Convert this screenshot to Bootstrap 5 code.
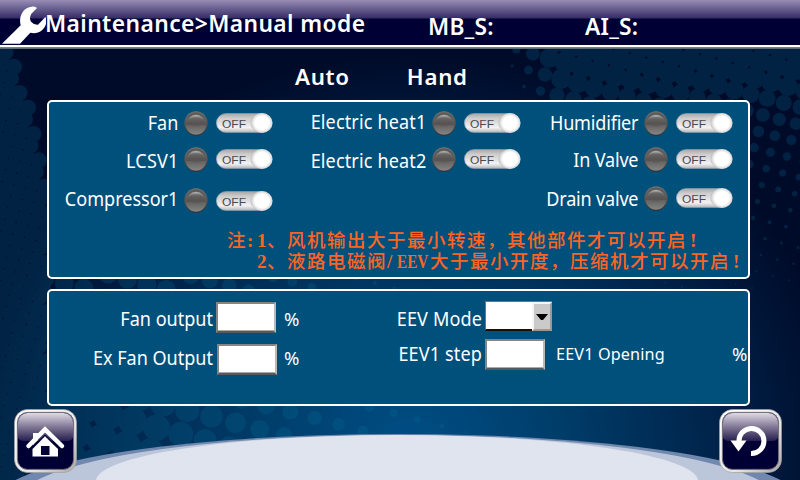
<!DOCTYPE html>
<html lang="en">
<head>
<meta charset="utf-8">
<meta name="viewport" content="width=device-width, initial-scale=1">
<title>Maintenance - Manual mode</title>
<link href="https://cdn.jsdelivr.net/npm/bootstrap@5.3.0/dist/css/bootstrap.min.css" rel="stylesheet">
<style>
body{width:800px;height:480px;overflow:hidden;background:#000a28;color:#fff;font-family:"Noto Sans","Noto Sans CJK SC",sans-serif}
.screen{width:800px;height:480px;isolation:isolate}
.backdrop{inset:0;z-index:-1}
.topbar{height:49px;background:linear-gradient(#988db4 0,#362d67 18px,#000034 19px,#000034 45px,#fff 45px,#fff 47px,#85888b 47px,#55606a 49px);font-size:22.8px;font-weight:600;line-height:48px;white-space:nowrap}
.topbar .wrench{width:46px;height:45px;flex:none}
.t-title{width:383px;letter-spacing:.4px;margin-left:-1px}
.t-mb{width:157px;padding-top:3px;letter-spacing:.2px}
.t-ai{padding-top:3px;letter-spacing:.2px}
.modes{height:51px;padding:11px 0 0 295px;gap:57px;font-size:22.3px;font-weight:600;line-height:34px;letter-spacing:.7px}
.panel{width:703px;margin-left:47px;background:#00507c;border:2px solid #fff;border-radius:5px}
.p-relay{height:179px}
.p-out{height:117px;margin-top:10px}
.cols{height:127px}
.c1{width:224px}.c2{width:248px}.c3{width:212px}
.unit{height:38px}
.lbl{font-size:19.2px;line-height:26px;white-space:nowrap;transform:scaleX(.94);transform-origin:right}
.unit .lbl{flex:1;text-align:right;padding-right:6px}
.c1 .unit:nth-child(2) .lbl,.c2 .lbl{letter-spacing:.15px}
.c3 .lbl{letter-spacing:-.2px}
.led{width:24px;height:25px;margin:1px 8px 0 0;flex:none}
.tog{width:57px;height:21px;flex:none}
.c1 .unit:nth-child(1),.c3 .unit:nth-child(1){height:36px;padding-top:8px}
.c2 .unit:nth-child(1){height:36px;padding-top:8px}
.c1 .unit:nth-child(2),.c2 .unit:nth-child(2),.c3 .unit:nth-child(2){height:39px;padding-top:8px}
.c1 .unit:nth-child(3){padding-top:11px}
.c3 .unit:nth-child(3){padding-top:8px}
.c1 .unit:nth-child(3) .led{margin-top:0}
.unit .tog{margin-top:3px}
.c2 .unit:nth-child(1) .lbl{margin-top:-1px}
.c1 .unit:nth-child(2) .lbl,.c2 .unit:nth-child(2) .lbl{margin-top:2px}
.c3 .unit:nth-child(2) .lbl{margin-top:1px}
.c1 .unit:nth-child(3) .lbl{margin-top:-2px}
.c3 .unit:nth-child(3) .lbl{margin-top:1px}
.note{color:#ff6423;font-family:"Noto Sans CJK SC",sans-serif;font-size:18.5px;height:21px;letter-spacing:1.5px;font-weight:500;line-height:21px;padding-left:178px;white-space:nowrap}
.note span{display:inline-block;width:10px;line-height:18px;height:18px;vertical-align:baseline;font-family:"Liberation Serif",serif;font-size:19px;letter-spacing:0;font-weight:700}
.note span:last-child{padding-left:3px}
.note .eev{width:33px;transform:scaleX(.8);transform-origin:left}
.note .ind{width:30px}
.gL{width:340px;padding-top:7px}
.fld{height:39px}
.fld .lbl{text-align:right}
.gL .lbl{width:164px}
.gL .fld:nth-child(1) .entry{margin:4px 0 0 3px}
.gL .fld:nth-child(2) .entry{margin:7px 0 0 4px}
.gL .fld:nth-child(1) .pct{margin-left:8px}
.gL .fld:nth-child(2) .pct{margin-left:7px}
.gR{padding-top:10px}
.gR .lbl{width:93px;margin-right:3px;letter-spacing:.15px}
.row-mode{height:38px!important}
.row-mode .lbl{margin-top:5px}
.row-step .lbl,.row-step .opening,.row-step .pct{margin-top:2px}
.entry{width:60px;height:31px;background:#fff;border:2px solid #b9b9b9;border-top-color:#858585;border-left-color:#858585;box-shadow:inset 0 -1px #aaa;border-bottom-color:#555a60;border-radius:0;padding:0;flex:none}
.combo{width:67px;height:30px;border:1px solid #77746f;background:#fff;flex:none;border-bottom:2px solid #111}
.combo .drop{width:20px;height:29px;background:#cacaca;border:2px solid #f5f5f5;border-right-color:#999;border-bottom-color:#999;margin-right:-1px}
.pct{font-size:18.5px;line-height:26px}
.opening{font-size:16.2px;line-height:26px;width:187px;padding-left:11px;letter-spacing:.15px}
.keys{padding:3px 18px 0 14px}
.key{width:63px;height:64px;background:none;border:0;padding:0}
</style>
</head>
<body>
<div class="screen position-relative">
<svg class="backdrop position-absolute" width="800" height="480" viewBox="0 0 800 480">
<defs>
<radialGradient id="glow" gradientUnits="userSpaceOnUse" cx="0" cy="0" r="1" gradientTransform="translate(410 455) scale(440 400)">
<stop offset="0" stop-color="#004f87"/><stop offset=".35" stop-color="#003d69"/><stop offset=".7" stop-color="#00234a"/><stop offset="1" stop-color="#000b29"/></radialGradient>
<linearGradient id="ledRim" x1="0" y1="0" x2="0" y2="1"><stop offset="0" stop-color="#777"/><stop offset="1" stop-color="#303030"/></linearGradient>
<linearGradient id="ledTop" x1="0" y1="0" x2="0" y2="1"><stop offset="0" stop-color="#b5b5b5"/><stop offset=".4" stop-color="#6e6d6c"/><stop offset=".8" stop-color="#575452"/><stop offset="1" stop-color="#575452"/></linearGradient>
<linearGradient id="ledLow" x1="0" y1="0" x2="0" y2="1"><stop offset=".5" stop-color="#5e5c5b"/><stop offset="1" stop-color="#858585"/></linearGradient>
<linearGradient id="track" x1="0" y1="0" x2="0" y2="1"><stop offset="0" stop-color="#aaa"/><stop offset=".25" stop-color="#cecccc"/><stop offset=".75" stop-color="#f3f1f1"/><stop offset="1" stop-color="#b9b9bb"/></linearGradient>
<radialGradient id="knob"><stop offset=".68" stop-color="#fff"/><stop offset="1" stop-color="#d2d2d2"/></radialGradient>
<linearGradient id="keyRim" x1="0" y1="0" x2="1" y2="1"><stop offset="0" stop-color="#fff"/><stop offset=".6" stop-color="#e9e8e8"/><stop offset="1" stop-color="#aaa6a6"/></linearGradient>
<linearGradient id="gloss" x1="0" y1="0" x2="0" y2="1"><stop offset="0" stop-color="#dedae4"/><stop offset=".5" stop-color="#817795"/><stop offset="1" stop-color="#251d4e"/></linearGradient>
<symbol id="led" viewBox="0 0 24 25"><ellipse cx="12" cy="12.5" rx="11.7" ry="12.3" fill="url(#ledRim)"/><ellipse cx="12" cy="12.5" rx="10.6" ry="11.3" fill="url(#ledLow)"/><path d="M1.6 14A10.5 11.8 0 0 1 22.4 14Z" fill="url(#ledTop)"/><ellipse cx="12" cy="11" rx="7.5" ry="5" fill="#575452" opacity=".4"/></symbol>
<symbol id="tog" viewBox="0 0 57 21"><rect x=".5" y=".7" width="55" height="18.6" rx="9.3" fill="url(#track)" stroke="#a5adb5" stroke-width=".8"/><path d="M41 1.8A10 9 0 0 0 41 18.3L46 18V2Z" fill="#eee" stroke="#b4b4b4" stroke-width=".8"/><ellipse cx="46" cy="10" rx="10.6" ry="9.9" fill="url(#knob)"/><text x="6" y="14.8" font-family="Liberation Sans, sans-serif" font-size="11.4" textLength="24" lengthAdjust="spacingAndGlyphs" fill="#4a4a4a">OFF</text></symbol>
<symbol id="keycap" viewBox="0 0 63 64"><rect x=".5" y=".5" width="62" height="63" rx="13" fill="url(#keyRim)" stroke="#a39e9e" stroke-width=".7"/><rect x="3.4" y="3.4" width="56.2" height="57" rx="10" fill="#000034" stroke="#77717d" stroke-width="1"/><path d="M4 31V13.5A9.5 9.5 0 0 1 13.5 4H49.5A9.5 9.5 0 0 1 59 13.5V28Q59 31 54 32H9Q4 31 4 28Z" fill="url(#gloss)"/></symbol>
</defs>
<rect width="800" height="480" fill="url(#glow)"/>
<g id="halftone"></g>
<ellipse cx="398" cy="499" rx="400" ry="65" fill="#7088ad"/>
<ellipse cx="398" cy="500" rx="379" ry="65" fill="#bcc6da"/>
<ellipse cx="397" cy="481" rx="301" ry="46" fill="#e0e4ee"/>
</svg>

<header class="topbar d-flex">
<svg class="wrench" viewBox="0 0 138 135"><path d="M6 131L62 76C55 50 69 22 95 20Q105 19 111 24L94 41Q86 56 94 66Q102 75 114 74L136 51L140 58C140 85 118 105 91 98L60 131Z" fill="#fff"/></svg>
<div class="t-title">Maintenance&gt;Manual mode</div><div class="t-mb">MB_S:</div><div class="t-ai">AI_S:</div>
</header>
<div class="modes d-flex"><div>Auto</div><div>Hand</div></div>

<section class="panel p-relay">
<div class="cols d-flex">
<div class="c1">
<div class="unit d-flex"><div class="lbl">Fan</div><svg class="led"><use href="#led"/></svg><svg class="tog"><use href="#tog"/></svg></div>
<div class="unit d-flex"><div class="lbl">LCSV1</div><svg class="led"><use href="#led"/></svg><svg class="tog"><use href="#tog"/></svg></div>
<div class="unit d-flex"><div class="lbl">Compressor1</div><svg class="led"><use href="#led"/></svg><svg class="tog"><use href="#tog"/></svg></div>
</div>
<div class="c2">
<div class="unit d-flex"><div class="lbl">Electric heat1</div><svg class="led"><use href="#led"/></svg><svg class="tog"><use href="#tog"/></svg></div>
<div class="unit d-flex"><div class="lbl">Electric heat2</div><svg class="led"><use href="#led"/></svg><svg class="tog"><use href="#tog"/></svg></div>
</div>
<div class="c3">
<div class="unit d-flex"><div class="lbl">Humidifier</div><svg class="led"><use href="#led"/></svg><svg class="tog"><use href="#tog"/></svg></div>
<div class="unit d-flex"><div class="lbl">In Valve</div><svg class="led"><use href="#led"/></svg><svg class="tog"><use href="#tog"/></svg></div>
<div class="unit d-flex"><div class="lbl">Drain valve</div><svg class="led"><use href="#led"/></svg><svg class="tog"><use href="#tog"/></svg></div>
</div>
</div>
<div class="note" lang="zh-CN">注<span>:</span><span>1</span>、风机输出大于最小转速，其他部件才可以开启<span>!</span></div>
<div class="note" lang="zh-CN"><span class="ind"></span><span>2</span>、液路电磁阀<span>/</span><span class="eev">EEV</span>大于最小开度，压缩机才可以开启<span>!</span></div>
</section>

<section class="panel p-out d-flex">
<div class="gL">
<div class="fld d-flex"><div class="lbl pt-2">Fan output</div><div class="entry"></div><div class="pct pt-2">%</div></div>
<div class="fld d-flex"><div class="lbl pt-2">Ex Fan Output</div><div class="entry"></div><div class="pct pt-2">%</div></div>
</div>
<div class="gR">
<div class="fld row-mode d-flex"><div class="lbl">EEV Mode</div><div class="combo d-flex justify-content-end"><div class="drop d-flex align-items-center justify-content-center"><svg width="12" height="6" viewBox="0 0 12 6"><path d="M0 0H12L7 6H5Z"/></svg></div></div></div>
<div class="fld row-step d-flex"><div class="lbl">EEV1 step</div><div class="entry"></div><div class="opening">EEV1 Opening</div><div class="pct">%</div></div>
</div>
</section>

<nav class="keys d-flex justify-content-between">
<button class="key" type="button" aria-label="Home"><svg width="63" height="64" viewBox="0 0 63 64"><use href="#keycap"/><path d="M14.5 37L31 20.5L48 37" fill="none" stroke="#fff" stroke-width="4.5" stroke-linecap="round" stroke-linejoin="miter"/><path d="M19 24H24V31L19 36Z" fill="#fff"/><path d="M18.5 40L31 27.5L44 40V47.5H18.5Z" fill="#fff"/><path d="M18 39L31 26L44 39" fill="none" stroke="#000034" stroke-width="1"/><path d="M27 37H35.5V46H27Z" fill="#000034"/></svg></button>
<button class="key" type="button" aria-label="Back"><svg width="63" height="64" viewBox="0 0 63 64"><use href="#keycap"/><path d="M20 33A12.5 12.5 0 1 1 32 44.5" fill="none" stroke="#fff" stroke-width="5"/><path d="M11.5 31.5H27.5L19.5 42.5Z" fill="#fff"/></svg></button>
</nav>
</div>
<script src="https://cdn.jsdelivr.net/npm/bootstrap@5.3.0/dist/js/bootstrap.bundle.min.js"></script>
<script>
// Halftone dots on a slanted lattice; the radius follows the distance to a soft arc.
const g = document.getElementById('halftone');
let d = '';
function field(x0, y0, x1, y1, step, radius) {
  const c = Math.cos(.26) * step, s = Math.sin(.26) * step;
  for (let i = -70; i < 70; i++) for (let j = -70; j < 70; j++) {
    const x = x0 + i * c - j * s, y = y0 + i * s + j * c;
    if (x < x0 - 5 || x > x1 || y < y0 - 5 || y > y1) continue;
    const r = radius(x, y);
    if (r > .5) d += `<circle cx="${x.toFixed(1)}" cy="${y.toFixed(1)}" r="${r.toFixed(1)}"/>`;
  }
}
field(500, 45, 810, 290, 17, (x, y) => Math.min(11, (x - 496 - (y - 49) * .5) / 5, 15 * Math.exp(-(y - 49) / 85)));
field(-6, 49, 50, 480, 12, (x, y) => { const e = 6 + Math.pow(Math.max(0, y - 49), .62) * 1.9; return x < e ? 8 : 0; });
field(45, 278, 430, 292, 20, (x) => Math.min(9.5, (430 - x) / 28));
field(60, 402, 500, 478, 25, (x) => Math.min(15, 17 - (x - 60) / 26));
g.setAttribute('fill', '#087099');
g.setAttribute('opacity', '.23');
g.innerHTML = d;
</script>
</body>
</html>
